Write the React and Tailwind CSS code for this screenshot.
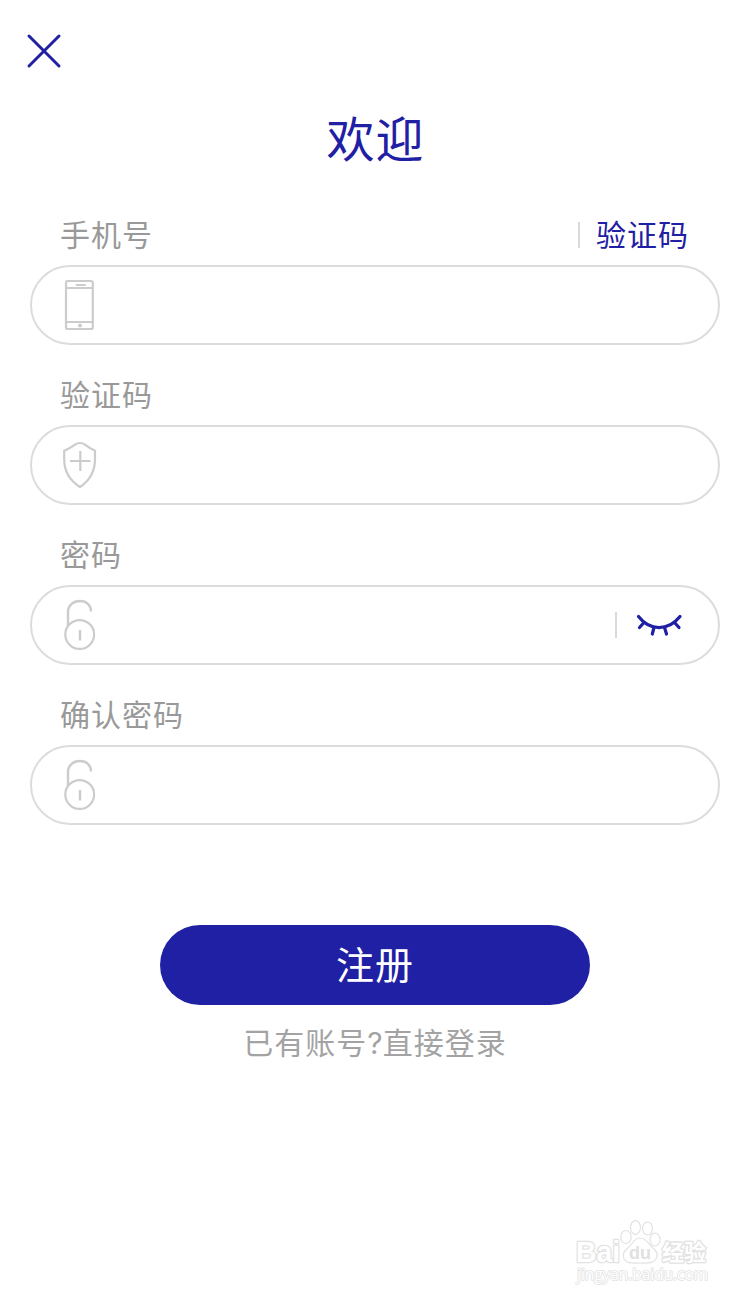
import React from 'react';

const CloseIcon = () => (
    <svg className="w-9 h-9" viewBox="0 0 36 36" fill="none" stroke="#1f20a3" strokeWidth="3" strokeLinecap="round">
        <path d="M3 3L33 33M33 3L3 33" />
    </svg>
);

const PhoneIcon = () => (
    <svg className="w-10 h-[52px]" viewBox="0 0 40 52" fill="none" stroke="#cccccc" strokeWidth="2">
        <rect x="6" y="2" width="26.8" height="48" rx="1.8" strokeWidth="2.2" />
        <path d="M6 9H33M6 43H33" />
        <path d="M16.5 6H25" strokeLinecap="round" />
        <circle cx="20" cy="46.5" r="2" fill="#cccccc" stroke="none" />
    </svg>
);

const ShieldIcon = () => (
    <svg className="w-10 h-[52px]" viewBox="0 0 40 52" fill="none" stroke="#cccccc" strokeWidth="2.2">
        <path d="M20 4C22 4 23.5 4.6 25 5.7C28 8 31 10 35 11.7V20C35 33 29 42 20 48C10.5 42 4.2 33 4.2 20V11.7C8.5 10 12 8 15 5.7C16.5 4.6 18 4 20 4Z" />
        <path d="M10 22H30.5M20.3 12V32" />
    </svg>
);

const LockIcon = () => (
    <svg className="w-10 h-[52px]" viewBox="0 0 40 52" fill="none" stroke="#cccccc" strokeWidth="2.2">
        <circle cx="19.7" cy="35.5" r="14.4" />
        <path d="M8 27V13C8 6.5 13 2 20 2C26.5 2 31 6 31 12.5" strokeWidth="2.4" />
        <path d="M20 31V41.5" strokeWidth="2.5" />
    </svg>
);

const EyeClosedIcon = () => (
    <svg className="w-12 h-6" viewBox="0 0 48 24" fill="none" stroke="#1f20a3" strokeWidth="3.2" strokeLinecap="round">
        <path d="M3.5 3.5C15 18.3 33 18.3 45 3.5" />
        <path d="M9 9.5L4.5 14.5M19 14.5L17.3 21M29.5 14.5L31.5 21M39.5 9.5L44 14.5" />
    </svg>
);

const Divider = () => <div className="w-0.5 h-[26px] bg-[#dadada]"></div>;

const Field = ({ label, icon, action, suffix }) => (
    <div>
        <div className="flex items-center justify-between h-[60px] pl-[30px] pr-[31px]">
            <span className="pb-1 text-[30px] leading-[56px] tracking-[1px] text-[#999999]">{label}</span>
            {action}
        </div>
        <div className="flex items-center justify-between h-20 pl-7 pr-[35px] border-2 border-[#dcdcdc] rounded-full">
            {icon}
            {suffix}
        </div>
    </div>
);

const Watermark = () => (
    <svg className="w-[150px] h-[76px]" viewBox="0 0 150 76" fill="#ffffff" stroke="#e2e2e2" strokeWidth="1.2" strokeLinejoin="round">
        <ellipse cx="56" cy="22" rx="5.2" ry="6.5" />
        <ellipse cx="65.5" cy="12.5" rx="5" ry="6.8" />
        <ellipse cx="77.5" cy="13.5" rx="5" ry="6.5" />
        <ellipse cx="85" cy="24.5" rx="5" ry="6.5" />
        <path d="M70 23C76 23 78 28 82 32C87 36 89 40 86 44C83 49 77 48 70 48C63 48 57 49 54 44C52 39 54 36 59 32C63 28 64 23 70 23Z" />
        <g strokeWidth="2.6" paintOrder="stroke">
            <text x="6" y="47" fontSize="29" fontWeight="bold" fontFamily="'Liberation Sans', sans-serif" textLength="44" lengthAdjust="spacingAndGlyphs">Bai</text>
            <text x="92" y="45" fontSize="22" fontWeight="bold" fontFamily="'Noto Sans CJK SC', sans-serif">经验</text>
        </g>
        <text x="59" y="44" fontSize="19" fontWeight="bold" fontFamily="'Liberation Sans', sans-serif" fill="#e0e0e0" stroke="none" textLength="22" lengthAdjust="spacingAndGlyphs">du</text>
        <text x="7" y="65" fontSize="15.5" strokeWidth="1.6" paintOrder="stroke" textLength="131" lengthAdjust="spacingAndGlyphs" fontFamily="'Open Sans', sans-serif">jingyan.baidu.com</text>
    </svg>
);

function App() {
    return (
        <div className="flex flex-col w-[750px] h-[1301px] overflow-hidden bg-white font-['Noto_Sans_CJK_SC',sans-serif]">
            <header className="pt-[33px] pl-[26px]">
                <button className="block">
                    <CloseIcon />
                </button>
            </header>
            <h1 className="mt-8 h-[74px] pl-px text-center text-[48px] leading-[70px] tracking-[1px] text-[#1f20a3]">欢迎</h1>

            <main className="flex flex-col gap-5 mt-[30px] px-[30px]">
                <Field
                    label="手机号"
                    icon={<PhoneIcon />}
                    action={
                        <div className="flex items-center gap-4">
                            <Divider />
                            <span className="pb-1 text-[30px] leading-[56px] tracking-[1px] text-[#1f20a3]">验证码</span>
                        </div>
                    }
                />
                <Field label="验证码" icon={<ShieldIcon />} />
                <Field
                    label="密码"
                    icon={<LockIcon />}
                    suffix={
                        <div className="flex items-center gap-[18px]">
                            <Divider />
                            <EyeClosedIcon />
                        </div>
                    }
                />
                <Field label="确认密码" icon={<LockIcon />} />
            </main>

            <div className="flex flex-col items-center mt-[100px]">
                <button className="w-[430px] h-20 pb-1 rounded-full bg-[#1f20a3] text-[38px] leading-[76px] tracking-[1px] text-white">注册</button>
                <a className="mt-1.5 text-[30px] leading-[60px] tracking-[1px] text-[#a3a3a3]">
                    已有账号<span className="font-['Inter'] tracking-[0px]">?</span>直接登录
                </a>
            </div>

            <footer className="flex justify-end mt-auto pr-[30px] pb-2.5">
                <Watermark />
            </footer>
        </div>
    );
}

export default App;
